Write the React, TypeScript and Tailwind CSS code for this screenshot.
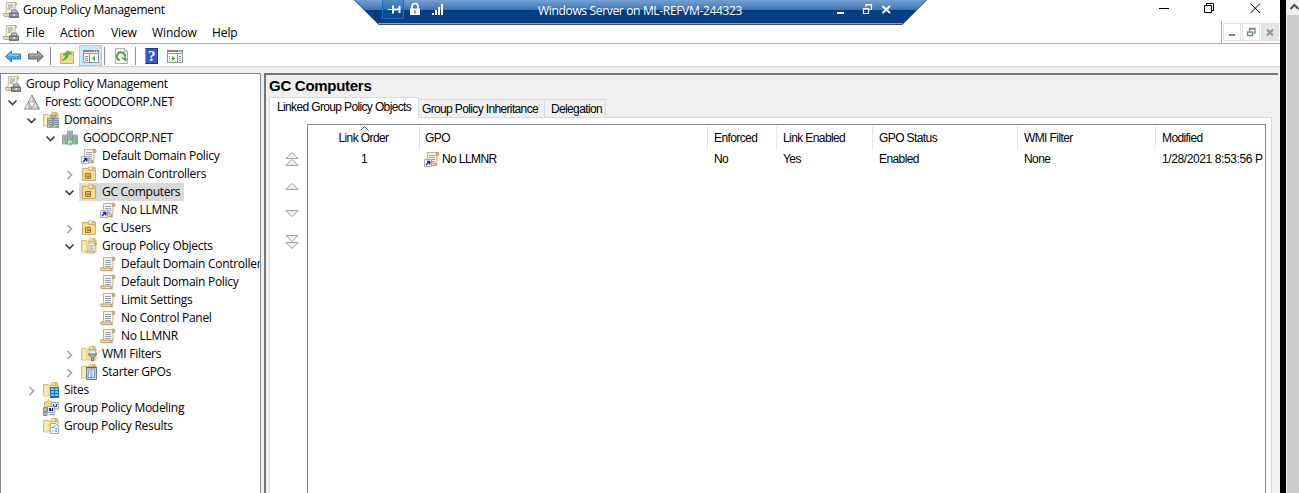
import type { ReactNode } from 'react';

type IconName =
  | 'console' | 'forest' | 'domains' | 'domain' | 'link' | 'ou' | 'gpoFolder'
  | 'gpo' | 'wmi' | 'starter' | 'sites' | 'modeling' | 'results';

const Scroll = () => (
  <>
    <path d="M3.500 1.500h9.500v8l-.5 4H3l.5-3z" fill="#fbf6e2" stroke="#b5a98a" strokeWidth=".9" />
    <path d="M12.300 1.200c2.800-.6 3.200 1.500 2.200 3.300h-2.200z" fill="#d3b975" stroke="#a38a4c" strokeWidth=".6" />
    <path d="M1 12h10.300c-.5 1.900.2 2.700 1.200 2.700H2c-1.300 0-1.800-1.700-1-2.700z" fill="#f1dfab" stroke="#a78f56" strokeWidth=".9" />
    <path d="M5 4.500h6M5 6.500h6M5 8.500h6M5 10.500h5.500" stroke="#9a9db4" />
  </>
);

const Folder = () => (
  <>
    <path d="M8 1.500l1-1h5l1 1v3H8z" fill="#f2d37c" stroke="#c79d45" strokeWidth=".7" />
    <path d="M9.500 1.900h3" stroke="#fff" />
    <path d="M11.500 1.900h2" stroke="#48a9e6" />
    <path d="M.5 2.500h5l1 1h8.500v10.500H.5z" fill="#f8dc90" stroke="#d8b465" strokeWidth=".8" />
    <path d="M1.500 3.500h3v10h-3z" fill="#fdebb5" />
  </>
);

const Server = ({ x, y }: { x: number; y: number }) => (
  <g transform={`translate(${x} ${y})`}>
    <path d="M0 0h5v9H0z" fill="#b9c5ce" stroke="#74828d" strokeWidth=".7" />
    <path d="M.8 2h3.500M.8 4h3.500M.8 6h3.500" stroke="#5c6b77" strokeWidth=".7" />
    <path d="M2.500 7h2v2h-2z" fill="#38df22" />
  </g>
);

const glyphs: Record<IconName, ReactNode> = {
  console: (
    <>
      <path d="M3.500.5h9.500l-1 2.500v9H1.500l1.500-2z" fill="#f6efdc" stroke="#b0a48c" strokeWidth=".8" />
      <path d="M12 .5c2.300-.3 2.800 1.800 1.300 3H12z" fill="#c7ad78" />
      <path d="M.5 11.500h8v3H1.500c-1 0-1.500-1.500-1-3z" fill="#e8dab8" stroke="#998d75" strokeWidth=".7" />
      <path d="M5 3h5M5 5h5M4.500 7h4" stroke="#9294a0" />
      <path d="M8 11l1-3h4.500l1 3z" fill="#c4cad0" stroke="#626a73" strokeWidth=".8" />
      <path d="M6.500 11h9v4.500h-9z" fill="#78838f" stroke="#4d5660" strokeWidth=".7" />
      <path d="M7 13h8" stroke="#c7d0d8" strokeWidth=".8" />
      <path d="M10.500 12h1.500v2h-1.500z" fill="#e9edf0" />
    </>
  ),
  forest: (
    <>
      <path d="M8 1l7.500 14H.5z" fill="#c4c4c4" stroke="#808080" strokeWidth=".9" />
      <path d="M7.800 2v5.500H4.800z M4 9v5.500H1.200z M11.800 9v5.500H9z" fill="#e9e9e9" />
      <path d="M4.600 8h6.800L8 14z" fill="#fff" stroke="#888" strokeWidth=".7" />
    </>
  ),
  domains: (
    <>
      <Folder />
      <Server x={8} y={3} /><Server x={4.500} y={6.500} /><Server x={10.800} y={6.500} />
    </>
  ),
  domain: (
    <>
      <Server x={5.500} y={1} /><Server x={.5} y={5} /><Server x={10.500} y={5} />
      <path d="M6 10.500h4v4.500H6z" fill="#e3e8ec" stroke="#8996a0" strokeWidth=".6" /><path d="M7.500 12.500h2v2h-2z" fill="#39dd24" />
    </>
  ),
  link: (
    <>
      <Scroll />
      <path d="M.5 8.500h7v7h-7z" fill="#fff" stroke="#a5a8bb" />
      <path d="M2 14l3-3M2.800 10.500h3v3" fill="none" stroke="#25249a" strokeWidth="1.500" />
    </>
  ),
  ou: (
    <>
      <path d="M7 2l1-1h5.500l1 1v3H7z" fill="#f4d88a" stroke="#c9a550" strokeWidth=".7" />
      <path d="M9 2.300h2" stroke="#fff" /><path d="M11 2.300h2" stroke="#48a9e6" />
      <path d="M1.500 2.500h5l1.500 2h6.500v10h-13z" fill="#f8dc8c" stroke="#cda655" strokeWidth=".9" />
      <path d="M4.500 7.500h5v5h-5z" fill="#e2c268" stroke="#8f7130" strokeWidth=".9" />
      <path d="M6 9.500h2.500v1.500H6z" fill="#8a6d2b" />
    </>
  ),
  gpoFolder: (
    <>
      <Folder />
      <g transform="translate(4.500 4) scale(.75)"><Scroll /></g>
    </>
  ),
  gpo: <Scroll />,
  wmi: (
    <>
      <Folder />
      <path d="M8.500 4.500h6v4h-6z" fill="#e8edf2" stroke="#9aa6b1" strokeWidth=".7" />
      <path d="M7 8h9l-3.500 4v3h-2v-3z" fill="#8eafc7" stroke="#4f718c" strokeWidth=".8" />
    </>
  ),
  starter: (
    <>
      <Folder />
      <path d="M5.500 3.500h10v12h-10z" fill="#bad5e9" stroke="#637f98" />
      <path d="M5 3.500h10.500" stroke="#8b5338" strokeWidth="1.500" />
      <path d="M8 6h5.500v7.500H7z" fill="#f6fbff" stroke="#477da5" strokeWidth=".7" />
      <path d="M9 8h3M9 10h3M9 12h3" stroke="#3979a9" strokeWidth=".8" />
    </>
  ),
  sites: (
    <>
      <Folder />
      <path d="M7 5h9v11H7z" fill="#1474bd" />
      <path d="M8 6h3v2H8zM12 6h3v2h-3zM8 9h3v2H8zM12 9h3v2h-3zM8 12h3v2H8zM12 12h3v2h-3z" fill="#77c8f2" />
    </>
  ),
  modeling: (
    <>
      <path d="M1.500 2l5-1.500 3 2v9h-8z" fill="#f2d37f" stroke="#c79f4f" strokeWidth=".7" />
      <path d="M8.500 2.500h7V9h-7z" fill="#e4e7ed" stroke="#8c93a4" strokeWidth=".8" />
      <path d="M10 4h4v3h-4z" fill="#253ba6" /><path d="M11 4h2v2h-2z" fill="#bcd6ff" />
      <path d="M4.500 6.500h7v6h-7z" fill="#e8ebf1" stroke="#8991a5" strokeWidth=".8" />
      <path d="M6 8h4v3H6z" fill="#1b278f" /><path d="M8 8h1v2H8z" fill="#8dc8ff" />
      <path d="M.5 7.500H4v8H.5z" fill="#b2b9bd" stroke="#737b82" strokeWidth=".8" />
      <path d="M1 11h2v2H1z" fill="#52b553" />
      <path d="M6 14.500h6" stroke="#999" strokeWidth="1.500" />
    </>
  ),
  results: (
    <>
      <Folder />
      <path d="M7.500 5.500h5l3 3v7h-8z" fill="#fff" stroke="#8c99a5" strokeWidth=".8" />
      <path d="M9 9l1 1 2-2.500M9 13h1M11.500 13H14M12.500 10.500H14" fill="none" stroke="#2482bd" strokeWidth="1" />
    </>
  ),
};

const Icon = ({ name }: { name: IconName }) => (
  <svg className="block size-4 shrink-0" viewBox="0 0 16 16">{glyphs[name]}</svg>
);

type Node = { depth: string; icon: IconName; label: string; chev?: 'open' | 'closed'; selected?: boolean };

const D0 = 'pl-px';
const D1 = 'pl-[5px]';
const D2 = 'pl-[24px]';
const D3 = 'pl-[43px]';
const D4 = 'pl-[62px]';
const D5 = 'pl-[81px]';

const tree: Node[] = [
  { depth: D0, icon: 'console', label: 'Group Policy Management' },
  { depth: D1, icon: 'forest', label: 'Forest: GOODCORP.NET', chev: 'open' },
  { depth: D2, icon: 'domains', label: 'Domains', chev: 'open' },
  { depth: D3, icon: 'domain', label: 'GOODCORP.NET', chev: 'open' },
  { depth: D4, icon: 'link', label: 'Default Domain Policy' },
  { depth: D4, icon: 'ou', label: 'Domain Controllers', chev: 'closed' },
  { depth: D4, icon: 'ou', label: 'GC Computers', chev: 'open', selected: true },
  { depth: D5, icon: 'link', label: 'No LLMNR' },
  { depth: D4, icon: 'ou', label: 'GC Users', chev: 'closed' },
  { depth: D4, icon: 'gpoFolder', label: 'Group Policy Objects', chev: 'open' },
  { depth: D5, icon: 'gpo', label: 'Default Domain Controller' },
  { depth: D5, icon: 'gpo', label: 'Default Domain Policy' },
  { depth: D5, icon: 'gpo', label: 'Limit Settings' },
  { depth: D5, icon: 'gpo', label: 'No Control Panel' },
  { depth: D5, icon: 'gpo', label: 'No LLMNR' },
  { depth: D4, icon: 'wmi', label: 'WMI Filters', chev: 'closed' },
  { depth: D4, icon: 'starter', label: 'Starter GPOs', chev: 'closed' },
  { depth: D2, icon: 'sites', label: 'Sites', chev: 'closed' },
  { depth: D2, icon: 'modeling', label: 'Group Policy Modeling' },
  { depth: D2, icon: 'results', label: 'Group Policy Results' },
];

const TreeRow = ({ node }: { node: Node }) => (
  <div className={`flex h-[18px] items-center ${node.depth}`}>
    {node.depth !== D0 && (
      <svg className="mr-[3px] block h-4 w-3 shrink-0" viewBox="0 0 12 16" fill="none">
        {node.chev === 'open' && <path d="M1.500 6.500l4 4 4-4" stroke="#404040" strokeWidth="1.700" />}
        {node.chev === 'closed' && <path d="M3.500 5l4 4-4 4" stroke="#a6a6a6" strokeWidth="1.700" />}
      </svg>
    )}
    <div className={`flex h-[18px] items-center pr-1 pl-[2px] ${node.selected ? 'bg-[#d9d9d9]' : ''}`}>
      <Icon name={node.icon} />
      <span className="ml-[5px] leading-[18px] whitespace-nowrap">{node.label}</span>
    </div>
  </div>
);

const Separator = () => <div className="h-[18px] w-px bg-[#8d8d8d]" />;

const PaneIcon = ({ right }: { right?: boolean }) => (
  <svg className="block size-4" viewBox="0 0 16 16">
    <path d="M.5 1.500h15v12h-15z" fill="#fff" stroke="#8a929c" />
    <path d="M0 2h16" stroke="#7b8490" strokeWidth="2" />
    <path d="M11 2h1M13 2h1" stroke="#fff" />
    <path d="M1 4.500h14" stroke="#8a929c" />
    {right ? (
      <>
        <path d="M10.500 5.500v8M2 7.500h1M2 9.500h1M2 11.500h1M12 7.500h2M12 9.500h2M12 11.500h2" stroke="#7b8490" />
        <path d="M5 6.800l3.300 2.700L5 12.200z" fill="#43a929" />
      </>
    ) : (
      <>
        <path d="M6.500 5.500v8M2 7.500h3M2 9.500h3M2 11.500h3" stroke="#7b8490" />
        <path d="M12 6.800v5.400L9 9.500z" fill="#43a929" />
      </>
    )}
  </svg>
);

const Toolbar = () => (
  <div className="flex h-[23px] items-start border-b border-[#d9d9d9] bg-white pt-px pl-[5px]">
    <svg className="mt-[3px] block size-4" viewBox="0 0 16 16">
      <path d="M.5 8.500L6.500 3v3h9v5h-9v3z" fill="#38a6e8" stroke="#1b6fae" strokeWidth=".9" />
      <path d="M3 8l3-2.500v1.700h8.500" fill="none" stroke="#a4e0fb" />
    </svg>
    <svg className="mt-[3px] ml-[7px] block size-4" viewBox="0 0 16 16">
      <path d="M15.500 8.500L9.500 3v3h-9v5h9v3z" fill="#929292" stroke="#606060" strokeWidth=".9" />
      <path d="M1.500 7.200H10V5.500l3 2.500" fill="none" stroke="#c3c3c3" />
    </svg>
    <div className="mt-[2px] ml-[6px]"><Separator /></div>
    <svg className="mt-[4px] ml-2 block size-4" viewBox="0 0 16 16">
      <path d="M1.500 4.500h5l1-1.500h7v11.500h-13z" fill="#f6da90" stroke="#cba75a" strokeWidth=".9" />
      <path d="M10 2.500h4.500v2.500H10z" fill="#efd27d" stroke="#cba75a" strokeWidth=".5" />
      <path d="M3 11.500c2.200-1 3.500-3 3.500-5.500H4L8.800 1.500 13 5H9.500C9.200 8.500 7 11 3 11.500z" fill="#56c43c" stroke="#3b9a26" strokeWidth=".6" />
    </svg>
    <div className="ml-1 flex h-[21px] w-[23px] items-end justify-center border border-[#99d1ff] bg-[#cce8ff]"><PaneIcon /></div>
    <div className="mt-[2px] ml-[2px]"><Separator /></div>
    <svg className="mt-[3px] ml-[8px] block size-4" viewBox="0 0 16 16">
      <path d="M2.500.5h9l3 3v12h-12z" fill="#fff" stroke="#a9afb8" />
      <path d="M11.500.5v3h3" fill="none" stroke="#a9afb8" />
      <path d="M6.800 12.200A4 4 0 1 1 12 8.800" fill="none" stroke="#36ac2e" strokeWidth="2" />
      <path d="M8 9.500h5.500v4.500z" fill="#36ac2e" />
    </svg>
    <div className="mt-[2px] ml-[6px]"><Separator /></div>
    <div className="mt-[3px] ml-[9px] flex h-4 w-[13px] items-center justify-center border border-[#1b3a91] border-l-[#8ba3df] bg-[#3059c4] font-['Liberation_Serif',serif] text-[15px] leading-[15px] font-bold text-white">?</div>
    <div className="mt-1 ml-[9px]"><PaneIcon right /></div>
  </div>
);

const MdiButton = ({ children, dim }: { children: ReactNode; dim?: boolean }) => (
  <div className={`flex size-[18px] items-center justify-center border border-[#e3e3e3] ${dim ? 'bg-[#e5e5e5]' : 'bg-white'}`}>
    <svg className="block size-4 shrink-0" viewBox="0 0 16 16" fill="none">{children}</svg>
  </div>
);

const TitleAndMenu = () => (
  <div className="flex h-[44px] border-b border-[#a9adb3] bg-white">
    <div className="flex flex-1 flex-col pl-[3px]">
      <div className="flex h-[20px] items-center">
        <Icon name="console" />
        <span className="ml-1">Group Policy Management</span>
      </div>
      <div className="flex h-[23px] items-center pt-[2px] tracking-[-0.1px]">
        <Icon name="console" />
        <span className="ml-[7px] w-[34px]">File</span>
        <span className="w-[51px]">Action</span>
        <span className="w-[41px]">View</span>
        <span className="w-[60px]">Window</span>
        <span>Help</span>
      </div>
    </div>
    <div className="flex flex-col items-end">
      <div className="flex h-[21px] w-[138px] pl-px">
        <svg className="block h-4 w-[120px]" viewBox="0 0 120 16" fill="none" stroke="#000">
          <path d="M16 8.500h10M61.500 5.500h7v7h-7zM63.500 5V3.500h7v7H69M107.500 3.500l9.500 9.500M117 3.500L107.500 13" />
        </svg>
      </div>
      <div className="flex h-[22px] items-start gap-px border-l border-[#a9adb3] pt-[2px] pr-px pl-[1px]">
        <MdiButton><path d="M5 11h6" stroke="#75869a" strokeWidth="2" /></MdiButton>
        <MdiButton>
          <path d="M6.500 7V4.500h5.500v4.500H10.500M4.500 8h5v3.500h-5zM6 5h6.500M4 8h6" stroke="#75869a" strokeWidth="1.300" />
        </MdiButton>
        <MdiButton dim><path d="M5 5.500l6 6M11 5.500l-6 6" stroke="#8797aa" strokeWidth="2.200" /></MdiButton>
      </div>
    </div>
  </div>
);

const ConnectionBar = () => (
  <div className="absolute top-0 left-[354px] h-[25px] w-[573px]">
    <svg className="absolute inset-0 block h-[25px] w-[573px]" viewBox="0 0 573 25">
      <defs>
        <linearGradient id="bar" x1="0" y1="0" x2="0" y2="25" gradientUnits="userSpaceOnUse">
          <stop offset="0" stopColor="#75a1d4" />
          <stop offset=".38" stopColor="#3f75b3" />
          <stop offset=".4" stopColor="#063d84" />
          <stop offset="1" stopColor="#063d84" />
        </linearGradient>
      </defs>
      <path d="M0 0h573l-25 25H25z" fill="url(#bar)" />
      <path d="M24 23.500h525" stroke="#7ba6da" />
      <path d="M.5 0L25 24.500h523L572.500 0" fill="none" stroke="#454e5a" />
      <path d="M28.500-1h21v19.500h-21z" fill="#1764b5" fillOpacity=".35" stroke="#186dc0" />
      <path d="M34 9.500h5" stroke="#fff" />
      <path d="M39 5.500v8M40 9.500h5M45.500 6v7" stroke="#fff" strokeWidth="2" />
      <path d="M56 8.500h10V15H56z" fill="#fff" />
      <path d="M58 9V6.500a3 3 0 0 1 6 0V9" fill="none" stroke="#fff" strokeWidth="1.600" />
      <path d="M60.500 10.500h1v3h-1z" fill="#063d84" />
      <path d="M78 13h2v2h-2zM81 10h2v5h-2zM84 7h2v8h-2zM87 4h2v11h-2z" fill="#fff" />
      <path d="M483 13h7" stroke="#fff" strokeWidth="2" />
      <path d="M509.500 8.500h5v5h-5zM512 7V4.500h5.500v5H515M509 9h6M512 5h6" fill="none" stroke="#fff" strokeWidth="1.200" />
      <path d="M528.500 6l7.500 7M536 6l-7.500 7" stroke="#fff" strokeWidth="2" />
    </svg>
    <div className="relative pt-[3px] pl-[184px] leading-4 tracking-[-0.33px] whitespace-nowrap text-white">Windows Server on ML-REFVM-244323</div>
  </div>
);

const columns = [
  { label: 'Link Order', width: 'w-[112px] justify-center', value: '1' },
  { label: 'GPO', width: 'w-[288px] pl-[5px]', value: 'No LLMNR' },
  { label: 'Enforced', width: 'w-[69px] pl-[6px]', value: 'No' },
  { label: 'Link Enabled', width: 'w-[96px] pl-[6px]', value: 'Yes' },
  { label: 'GPO Status', width: 'w-[145px] pl-[6px]', value: 'Enabled' },
  { label: 'WMI Filter', width: 'w-[138px] pl-[6px]', value: 'None' },
  { label: 'Modified', width: 'w-[109px] pl-[6px]', value: '1/28/2021 8:53:56 P' },
];

const OrderArrow = ({ down, double }: { down?: boolean; double?: boolean }) => (
  <svg className="block h-4 w-4" viewBox="0 0 16 16" fill="#efefef" stroke="#a0a0a0">
    <g transform={down ? 'rotate(180 8 8)' : undefined}>
      {double ? <path d="M1.800 7.500L8 1.500l6.200 6zM1.800 14.500L8 8.500l6.200 6z" /> : <path d="M1.800 11.500L8 5.500l6.200 6z" />}
    </g>
  </svg>
);

const DetailPane = () => (
  <div className="flex min-w-0 flex-1 flex-col border-t-2 border-l-2 border-[#767676] bg-[#f0f0f0] pl-[3px]">
    <h1 className="h-[22px] pt-px text-[15px] leading-[20px] font-bold tracking-[-0.28px] text-black">GC Computers</h1>
    <div className="flex h-[20px] items-end text-[12px] tracking-[-0.64px]">
      <div className="relative z-10 -mb-px flex h-[21px] w-[150px] items-center border border-b-0 border-[#d9d9d9] bg-white pb-[2px] pl-[7px] whitespace-nowrap">Linked Group Policy Objects</div>
      <div className="flex h-[18px] w-[126px] items-center border-t border-r border-[#d9d9d9] pl-[3px] whitespace-nowrap">Group Policy Inheritance</div>
      <div className="flex h-[18px] w-[61px] items-center border-t border-r border-[#d9d9d9] pl-[6px] whitespace-nowrap">Delegation</div>
    </div>
    <div className="mr-[6px] flex min-h-0 flex-1 border-x border-t border-[#d9d9d9] bg-white pt-[6px]">
      <div className="flex w-[37px] flex-col pt-[27px] pl-[14px]">
        <OrderArrow double />
        <div className="mt-[11px]"><OrderArrow /></div>
        <div className="mt-[12px]"><OrderArrow down /></div>
        <div className="mt-[12px]"><OrderArrow double down /></div>
      </div>
      <div className="mr-[5px] flex min-w-0 flex-1 flex-col overflow-hidden border border-b-0 border-[#828790] text-[12px] tracking-[-0.6px]">
        <div className="mt-px flex h-[24px]">
          {columns.map((c, i) => (
            <div key={c.label} className={`relative flex shrink-0 items-center ${i < columns.length - 1 ? 'border-r border-[#e5e5e5]' : ''} ${c.width}`}>
              {c.label === 'Link Order' && (
                <svg className="absolute top-0 left-[52px] block h-[5px] w-[9px]" viewBox="0 0 9 5" fill="none" stroke="#555"><path d="M.5 4.500l4-4 4 4" /></svg>
              )}
              <span className="whitespace-nowrap">{c.label}</span>
            </div>
          ))}
        </div>
        <div className="flex h-[18px]">
          {columns.map((c) => (
            <div key={c.label} className={`flex shrink-0 items-center ${c.width}`}>
              {c.label === 'GPO' && <div className="mr-[2px] -ml-px"><Icon name="link" /></div>}
              <span className={`whitespace-nowrap ${c.label === 'Modified' ? 'tracking-[-0.4px]' : ''}`}>{c.value}</span>
            </div>
          ))}
        </div>
      </div>
    </div>
  </div>
);

export default function App() {
  return (
    <div className="relative flex h-[493px] w-[1299px] overflow-hidden bg-white font-['Open_Sans',sans-serif] text-[12px] tracking-[-0.28px] text-black">
      <div className="flex w-[1280px] flex-col bg-[#f0f0f0]">
        <TitleAndMenu />
        <Toolbar />
        <div className="mt-[6px] flex min-h-0 flex-1 pr-[2px]">
          <div className="w-[261px] overflow-hidden border border-b-0 border-[#828790] bg-white pt-px pl-px">
            {tree.map((n, i) => <TreeRow key={i} node={n} />)}
          </div>
          <div className="ml-[3px] flex min-w-0 flex-1 font-['Liberation_Sans',sans-serif] tracking-normal">
            <DetailPane />
          </div>
        </div>
      </div>
      <div className="w-[6px] bg-black" />
      <div className="flex flex-1 flex-col border-l border-[#f0f0f0] bg-[#cdcdcd]">
        <div className="flex h-[15px] justify-end bg-[#f0f0f0]">
          <svg className="block h-[15px] w-[10px]" viewBox="0 0 10 15" fill="none" stroke="#505050" strokeWidth="2"><path d="M1.500 9l4-4 4 4" /></svg>
        </div>
      </div>
      <ConnectionBar />
    </div>
  );
}
